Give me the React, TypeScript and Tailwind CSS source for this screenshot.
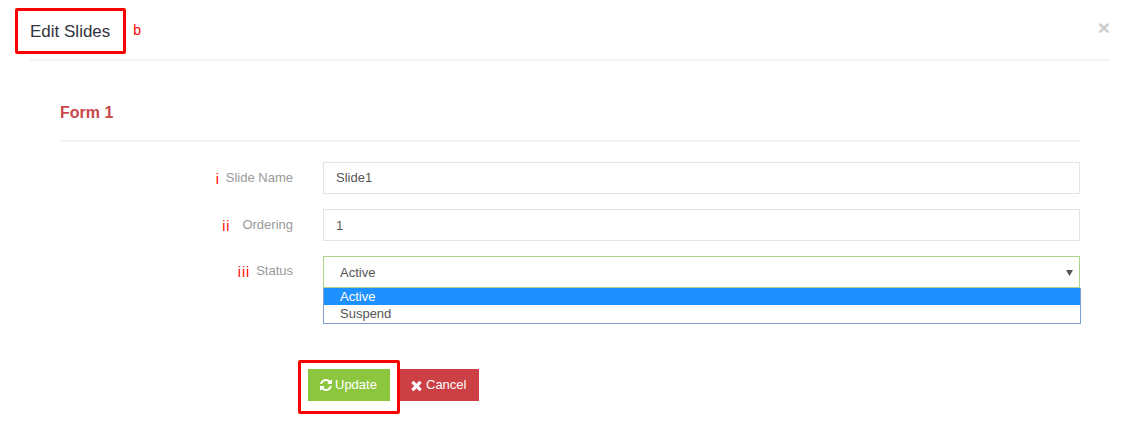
const font = { fontFamily: '"Liberation Sans", Arial, sans-serif' };

function RefreshIcon() {
  return (
    <svg width="14" height="14" viewBox="0 0 1792 1792" fill="currentColor" className="shrink-0">
      <path d="M1639 1056q0 5-1 7-64 268-268 434.500t-478 166.500q-146 0-282.500-55t-243.500-157l-129 129q-19 19-45 19t-45-19-19-45v-448q0-26 19-45t45-19h448q26 0 45 19t19 45-19 45l-137 137q71 66 161 102t187 36q134 0 250-65t186-179q11-17 53-117 8-23 30-23h192q13 0 22.500 9.500t9.500 22.500zm25-800v448q0 26-19 45t-45 19h-448q-26 0-45-19t-19-45 19-45l138-138q-148-137-349-137-134 0-250 65t-186 179q-11 17-53 117-8 23-30 23h-199q-13 0-22.500-9.500t-9.500-22.500v-7q65-268 270-434.500t480-166.500q146 0 284 55.500t245 156.500l130-129q19-19 45-19t45 19 19 45z" />
    </svg>
  );
}

function TimesIcon() {
  return (
    <svg width="15" height="15" viewBox="0 0 1792 1792" fill="currentColor" className="shrink-0">
      <path d="M1490 1322q0 40-28 68l-136 136q-28 28-68 28t-68-28l-294-294-294 294q-28 28-68 28t-68-28l-136-136q-28-28-28-68t28-68l294-294-294-294q-28-28-28-68t28-68l136-136q28-28 68-28t68 28l294 294 294-294q28-28 68-28t68 28l136 136q28 28 28 68t-28 68l-294 294 294 294q28 28 28 68z" />
    </svg>
  );
}

function Row({ mark, gap, label, value, shift }: { mark: string; gap: string; label: string; value: string; shift: string }) {
  return (
    <div className="flex h-8 mb-[15px]">
      <div className="w-[233px] flex justify-end items-start pt-[8px] text-[13px] leading-4 text-[#999]">
        <span className={`text-[#f00] text-[14px] tracking-[1px] mt-[1px] ${gap}`}>{mark}</span>
        <span>{label}</span>
      </div>
      <div className={`ml-[30px] flex-1 h-8 border border-[#e4e4e4] bg-white pl-3 flex items-center text-[13px] text-[#555] ${shift}`}>
        {value}
      </div>
    </div>
  );
}

export default function App() {
  return (
    <div className="relative w-[1138px] h-[427px] bg-white overflow-hidden" style={font}>
      <div className="ml-[30px] mr-[28px] h-[61px] border-b-2 border-[#f4f4f4] flex items-center justify-between">
        <div className="flex items-center">
          <span className="relative text-[17px] leading-5 text-[#32323a] mt-[4px]">
            Edit Slides
            <span className="absolute left-[-15px] top-[-14px] w-[111px] h-[46px] border-[3px] border-[#f00] rounded-[2px]" />
          </span>
          <span className="ml-[23px] text-[14px] text-[#f00] mt-[1px]">b</span>
        </div>
        <span className="text-[#ccc] text-[21px] font-bold leading-none mt-[-4px]">×</span>
      </div>

      <div className="ml-[60px] mr-[58px]">
        <div className="h-[81px] border-b-2 border-[#f4f4f4] flex items-center pt-[24px] mb-[20px]">
          <h3 className="text-[16px] leading-5 font-bold text-[#c9474a]">Form 1</h3>
        </div>

        <Row mark="i" gap="mr-[6px]" label="Slide Name" value="Slide1" shift="pb-0" />
        <Row mark="ii" gap="mr-[12px]" label="Ordering" value="1" shift="pt-[2px]" />

        <div className="flex">
          <div className="w-[233px] flex justify-end items-start pt-[7px] text-[13px] leading-4 text-[#999]">
            <span className="text-[#f00] text-[14px] tracking-[1px] mt-[1px] mr-[6px]">iii</span>
            <span>Status</span>
          </div>
          <div className="ml-[30px] flex-1">
            <div className="h-8 border border-[#a9d48a] bg-white pl-4 pr-[6px] pt-[2px] flex items-center justify-between text-[13px] text-[#555]">
              <span>Active</span>
              <svg width="7" height="7" viewBox="0 0 7 7" className="mt-[-1px]">
                <path d="M0 1h7L3.500 7z" fill="#555" />
              </svg>
            </div>
            <div className="mr-[-1px] h-[36px] border border-[#7c9bd3] border-t-0 text-[13px] leading-4 text-[#555] bg-white">
              <div className="bg-[#1e90ff] text-white pl-4 h-[17px] flex items-center">Active</div>
              <div className="pl-4 h-[17px] flex items-center">Suspend</div>
            </div>
          </div>
        </div>

        <div className="flex items-center gap-[9px] mt-[45px] ml-[248px] text-white text-[13px]">
          <button className="relative h-8 w-[82px] bg-[#8cc63f] flex items-center justify-start pl-[11px] gap-[2px]">
            <RefreshIcon />
            <span>Update</span>
            <span className="absolute left-[-10px] top-[-9px] w-[102px] h-[54px] border-[3px] border-[#f00] rounded-[2px]" />
          </button>
          <button className="h-8 w-[80px] bg-[#cc3f44] flex items-center justify-start pl-[10px] gap-[2px]">
            <TimesIcon />
            <span>Cancel</span>
          </button>
        </div>
      </div>
    </div>
  );
}
